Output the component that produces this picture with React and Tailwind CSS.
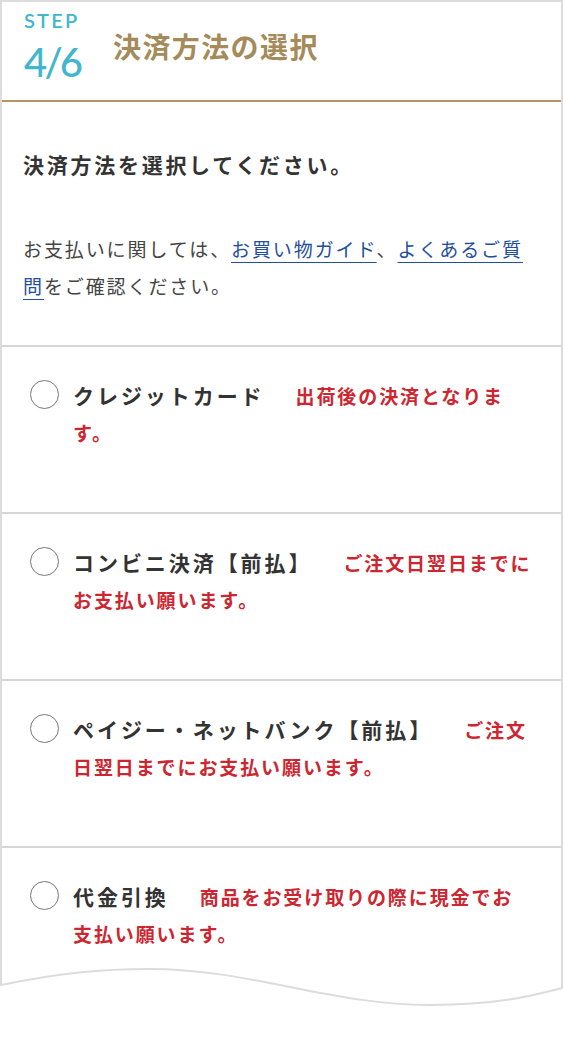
import React from 'react';

const jp = { fontFamily: '"Noto Sans CJK JP", "Noto Sans", sans-serif' };
const latin = { fontFamily: 'Lato, "Noto Sans CJK JP", sans-serif' };

const methods = [
  { id: 'card', label: 'クレジットカード', note: '出荷後の決済となります。' },
  { id: 'cvs', label: 'コンビニ決済【前払】', note: 'ご注文日翌日までにお支払い願います。' },
  { id: 'payeasy', label: 'ペイジー・ネットバンク【前払】', note: 'ご注文日翌日までにお支払い願います。' },
  { id: 'cod', label: '代金引換', note: '商品をお受け取りの際に現金でお支払い願います。' },
];

function MethodRow({ method, last }) {
  return (
    <label
      className={`flex items-start border-t-2 border-[#d6d6d6] pt-[30px] pl-[28px] pr-[27px] cursor-pointer ${last ? 'h-[122px]' : 'h-[167px]'}`}
    >
      <span className="mt-[3px] w-[29px] h-[29px] shrink-0 rounded-full border-[1.5px] border-[#777] bg-white"></span>
      <p className="ml-[14px] leading-[36px]" style={jp}>
        <span className="text-[21px] font-bold tracking-[0.14em] text-[#333]">{method.label}</span>
        <span className="ml-[31px] text-[19px] font-bold tracking-[0.1em] text-[#cc2631]">{method.note}</span>
      </p>
    </label>
  );
}

export default function App() {
  return (
    <div className="w-[563px] min-h-[1040px] bg-white">
      <div className="border-x-2 border-t-2 border-[#dcdcdc]">
        {/* Step header */}
        <header className="flex items-start h-[100px] px-[22px] border-b-2 border-[#b39462]">
          <div className="flex flex-col w-[60px] mt-[8px]" style={latin}>
            <span className="text-[20px] leading-[20px] font-semibold tracking-[0.11em] text-[#41b6cc]">STEP</span>
            <span className="mt-[10px] text-[40px] leading-[44px] font-medium tracking-[-0.07em] text-[#41b6cc]">4/6</span>
          </div>
          <h1 className="self-center ml-[29px] mb-[10px] text-[28px] font-bold tracking-[0.05em] text-[#a58b5a]" style={jp}>
            決済方法の選択
          </h1>
        </header>

        {/* Intro */}
        <section className="px-[21px] pt-[46px] pb-[41px]" style={jp}>
          <h2 className="text-[21px] leading-[32px] font-bold tracking-[0.13em] text-[#333]">決済方法を選択してください。</h2>
          <p className="mt-[50px] text-[19px] leading-[37px] tracking-[0.1em] text-[#444]">
            お支払いに関しては、
            <a href="#" className="text-[#1f4f9e] underline underline-offset-[5px]">お買い物ガイド</a>
            、
            <a href="#" className="text-[#1f4f9e] underline underline-offset-[5px]">よくあるご質問</a>
            をご確認ください。
          </p>
        </section>

        {/* Payment methods */}
        {methods.map((m, i) => (
          <MethodRow key={m.id} method={m} last={i === methods.length - 1} />
        ))}
      </div>

      {/* torn bottom edge */}
      <svg width="563" height="42" viewBox="0 0 563 42" className="block -mt-[1px]">
        <path
          d="M1,0 L1,18 C60,6 100,2 150,2 C250,2 330,38 430,38 C500,38 535,28 562,21 L562,0"
          fill="none"
          stroke="#dcdcdc"
          strokeWidth="2"
        />
      </svg>
    </div>
  );
}
